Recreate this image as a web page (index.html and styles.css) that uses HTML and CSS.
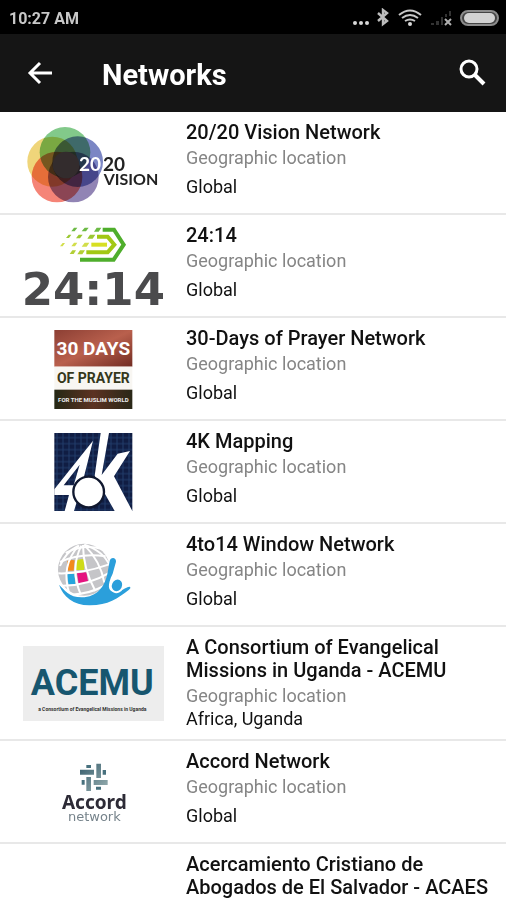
FILE: index.html
```html
<!DOCTYPE html>
<html lang="en">
<head>
    <meta charset="UTF-8">
    <meta name="viewport" content="width=device-width, initial-scale=1">
    <title>Networks</title>
    <link rel="stylesheet" href="styles.css">
</head>
<body>
    <div class="status-bar">
        <span class="time">10:27 AM</span>
        <svg class="status-icons" viewBox="0 0 147 20" aria-hidden="true">
            <!-- dots -->
            <g fill="#d8d8d8">
                <circle cx="3" cy="15" r="2"/>
                <circle cx="9" cy="15" r="2"/>
                <circle cx="15" cy="15" r="2"/>
            </g>
            <!-- bluetooth -->
            <path d="M26 5l9 8-4 3V2l4 3-9 8" fill="none" stroke="#bdbdbd" stroke-width="2.4"/>
            <!-- wifi -->
            <g fill="none" stroke="#c8c8c8" stroke-width="2">
                <path d="M47 7q11-9 22 0"/>
                <path d="M50 10q8-6 16 0"/>
                <path d="M53 13q5-3 10 0"/>
            </g>
            <circle cx="58" cy="16" r="2" fill="#d8d8d8"/>
            <!-- no signal -->
            <path d="M79 17v-2h3v2zM84 17v-4h3v4zM89 17V9h2v8zM93 9V6h2v3zM97 8V3h2v5z" fill="#333"/>
            <path d="M93 11l6 6M99 11l-6 6" stroke="#b0b0b0" stroke-width="2"/>
            <!-- battery -->
            <rect x="109" y="3" width="37" height="14" rx="7" fill="#444" stroke="#8c8c8c" stroke-width="2"/>
            <rect x="112" y="5" width="31" height="10" rx="5" fill="#d2d2d2"/>
        </svg>
    </div>

    <header class="toolbar">
        <button type="button" class="icon-btn" aria-label="Back">
            <svg viewBox="0 0 36 36"><path d="M30 18H9M18 8L8 18l10 10" fill="none" stroke="#fff" stroke-width="3"/></svg>
        </button>
        <h1>Networks</h1>
        <button type="button" class="icon-btn" aria-label="Search">
            <svg viewBox="0 0 36 36"><circle cx="15" cy="14" r="8" fill="none" stroke="#fff" stroke-width="3"/><path d="M21 20l9 9" stroke="#fff" stroke-width="4"/></svg>
        </button>
    </header>

    <ul class="networks">
        <li class="network">
            <svg class="logo" viewBox="69 31 423 240" aria-hidden="true">
                <g class="blend">
                    <circle cx="157" cy="147" r="75" fill="#efd57a"/>
                    <circle cx="195" cy="119" r="76" fill="#82c98a"/>
                    <circle cx="233" cy="147" r="76" fill="#7b86c4"/>
                    <circle cx="171" cy="193" r="76" fill="#f58477"/>
                    <circle cx="220" cy="193" r="76" fill="#9184b4"/>
                </g>
                <circle cx="198" cy="157" r="40" fill="#332c2d"/>
                <text x="237" y="176" class="lato" font-size="57" fill="#fff">20</text>
                <text x="309" y="176" class="lato" font-size="57" fill="#222">20</text>
                <text x="311" y="216" class="lato" font-size="48" fill="#222">VISION</text>
            </svg>
            <div class="info">
                <h2>20/20 Vision Network</h2>
                <p class="label">Geographic location</p>
                <p class="place">Global</p>
            </div>
        </li>
        <li class="network">
            <svg class="logo" viewBox="69 31 423 240" aria-hidden="true">
                <g fill="none" stroke-width="12">
                    <path d="M308 42h34l29 45-30 45H240" stroke="#4fae2c"/>
                    <path d="M291 63h32l20 24-20 23h-64" stroke="#a2c814"/>
                    <path d="M274 87h47" stroke="#d7df23"/>
                </g>
                <!-- slanted trail -->
                <path d="M222 36h10l-8 11h-10zM254 36h12l-8 11h-13zM290 36h14l-8 12h-14z" fill="#6cba45"/>
                <path d="M206 57h8l-7 10h-9zM236 57h12l-8 11h-12zM270 57h16l-8 12h-16z" fill="#9bc832"/>
                <path d="M188 82h7l-7 10h-8zM222 81h10l-7 11h-11zM254 81h14l-8 12h-15z" fill="#d2de4a"/>
                <path d="M217 104h11l-7 11h-12zM240 104h15l-8 12h-15z" fill="#b2cf35"/>
                <text x="280" y="269" class="dejavu" text-anchor="middle" font-size="135" fill="#4b4b4d">24:14</text>
            </svg>
            <div class="info">
                <h2>24:14</h2>
                <p class="label">Geographic location</p>
                <p class="place">Global</p>
            </div>
        </li>
        <li class="network">
            <svg class="logo" viewBox="69 25 423 240" aria-hidden="true">
                <defs>
                    <linearGradient id="sky" x1="0" y1="0" x2="1" y2="1">
                        <stop offset="0" stop-color="#8c3f34"/>
                        <stop offset=".5" stop-color="#b9604d"/>
                        <stop offset="1" stop-color="#722c22"/>
                    </linearGradient>
                    <linearGradient id="ground">
                        <stop offset="0" stop-color="#252815"/>
                        <stop offset=".5" stop-color="#5c3222"/>
                        <stop offset="1" stop-color="#292817"/>
                    </linearGradient>
                </defs>
                <rect x="163" y="28" width="234" height="110" fill="url(#sky)"/>
                <rect x="163" y="138" width="234" height="70" fill="#f8f6f2"/>
                <rect x="163" y="207" width="234" height="58" fill="url(#ground)"/>
                <text x="280" y="104" class="block" text-anchor="middle" font-size="57" fill="#fff">30 DAYS</text>
                <text x="280" y="188" class="block" text-anchor="middle" font-size="42" fill="#35381b">OF PRAYER</text>
                <text x="280" y="243" class="block" text-anchor="middle" font-size="18" fill="#eee">FOR THE MUSLIM WORLD</text>
            </svg>
            <div class="info">
                <h2>30-Days of Prayer Network</h2>
                <p class="label">Geographic location</p>
                <p class="place">Global</p>
            </div>
        </li>
        <li class="network">
            <svg class="logo" viewBox="69 28 423 240" aria-hidden="true">
                <defs>
                    <pattern id="grid" width="18" height="18" patternUnits="userSpaceOnUse">
                        <rect width="18" height="18" fill="#101d43"/>
                        <path d="M0 9h18M9 0v18" stroke="#213c6b" stroke-width="3"/>
                    </pattern>
                </defs>
                <rect x="163" y="31" width="234" height="234" fill="url(#grid)"/>
                <path d="M279 54l-32 128-25 83h-28l13-48h-44v-17zM239 126l-48 62h30z" fill="#fff" fill-rule="evenodd"/>
                <path d="M302 31h25l-22 126 48-64 37-8-48 76 55 104h-53l-60-106z" fill="#fff"/>
                <circle cx="266" cy="208" r="46" fill="#fff" stroke="#10182f" stroke-width="7"/>
            </svg>
            <div class="info">
                <h2>4K Mapping</h2>
                <p class="label">Geographic location</p>
                <p class="place">Global</p>
            </div>
        </li>
        <li class="network">
            <svg class="logo" viewBox="69 28 423 240" aria-hidden="true">
                <circle cx="252" cy="132" r="78" fill="#c5c5c8"/>
                <path d="M202 106q10-4 22-2l-3 31h-20z" fill="#f28a1c"/>
                <path d="M230 103q13-3 25-3l-3 33h-26z" fill="#cedb17"/>
                <path d="M200 146l23-2 3 31-20 2z" fill="#26a5dc"/>
                <path d="M231 143l28-3 6 31-29 4z" fill="#e5137f"/>
                <!-- globe lines -->
                <g fill="none" stroke="#fff" stroke-width="6">
                    <path d="M197 82q54-29 110-12M180 109q60-28 137-17M175 143q70 2 150-26M182 180q80 2 147-39M213 207q54-2 99-26"/>
                    <path d="M237 59q-56 60-29 145M244 60q-35 70-2 146M249 58q0 70 37 138M252 57q50 50 61 114M253 57q58 20 76 63M234 61q-38 19-54 60"/>
                </g>
                <path d="M177 177c16 15 30 38 68 38 47 0 70-32 78-75l6-34c2-12 20-12 19 2l-10 36c-18 36-14 56 8 54 18 0 30-14 43-15 4 2 2 6-3 10-32 25-64 47-119 46-46-1-78-26-90-62z" fill="#2b9fdb"/>
                <ellipse cx="351" cy="179" rx="18" ry="21" fill="#2b9fdb" stroke="#fff" stroke-width="6" transform="rotate(25 351 179)"/>
            </svg>
            <div class="info">
                <h2>4to14 Window Network</h2>
                <p class="label">Geographic location</p>
                <p class="place">Global</p>
            </div>
        </li>
        <li class="network">
            <svg class="logo" viewBox="69 56 423 225" aria-hidden="true">
                <rect x="69" y="56" width="423" height="225" fill="#ededed"/>
                <text x="277" y="204" class="block" text-anchor="middle" font-size="108" fill="#17566f">ACEMU</text>
                <text x="277" y="250" class="block" text-anchor="middle" font-size="15" fill="#333">a Consortium of Evangelical Missions in Uganda</text>
            </svg>
            <div class="info">
                <h2>A Consortium of Evangelical Missions in Uganda - ACEMU</h2>
                <p class="label">Geographic location</p>
                <p class="place">Africa, Uganda</p>
            </div>
        </li>
        <li class="network">
            <svg class="logo" viewBox="69 34 423 240" aria-hidden="true">
                <defs>
                    <linearGradient id="steel" x1="0" y1="0" x2="1" y2="1">
                        <stop offset="0" stop-color="#355c6b"/>
                        <stop offset="1" stop-color="#9bb1b3"/>
                    </linearGradient>
                </defs>
                <path d="M240 87h42v15h-42zM289 69h14v43h-14zM259 109h14v42h-14zM281 118h42v15h-42z" fill="url(#steel)"/>
                <path d="M259 73h14v9h-14zM308 88h10v14h-10zM245 118h9v14h-9zM288 138h15v9h-15z" fill="#48717e"/>
                <text x="283" y="204" class="noto" text-anchor="middle" font-size="57" fill="#2d2b36">Accord</text>
                <text x="283" y="240" class="thin" text-anchor="middle" font-size="39" fill="#76838b">network</text>
            </svg>
            <div class="info">
                <h2>Accord Network</h2>
                <p class="label">Geographic location</p>
                <p class="place">Global</p>
            </div>
        </li>
        <li class="network">
            <div class="logo"></div>
            <div class="info">
                <h2>Acercamiento Cristiano de Abogados de El Salvador - ACAES</h2>
            </div>
        </li>
    </ul>
</body>
</html>
```
FILE: styles.css
```css
* {
    box-sizing: border-box;
}
body {
    margin: 0;
    height: 100vh;
    display: flex;
    flex-direction: column;
    overflow: hidden;
    background-color: #fff;
    color: #111;
    font-family: Roboto, Arial, sans-serif;
}
h1, h2, p, ul {
    margin: 0;
    padding: 0;
}

/* top bars */
.status-bar {
    display: flex;
    flex: none;
    justify-content: space-between;
    align-items: center;
    height: 34px;
    padding: 2px 7px 0 9px;
    background-color: #000;
}
.time {
    color: #c8c8c8;
    font-size: 16px;
    font-weight: 700;
}
.status-icons {
    width: 147px;
    height: 20px;
}
.toolbar {
    display: flex;
    flex: none;
    align-items: center;
    height: 78px;
    padding: 0 16px 0 22px;
    background-color: #151515;
    color: #fff;
}
.toolbar h1 {
    flex: 1;
    margin-left: 44px;
    padding-top: 4px;
    font-size: 29px;
    font-weight: 700;
}
.icon-btn {
    width: 36px;
    height: 36px;
    padding: 0;
    border: 0;
    background: none;
    cursor: pointer;
}
.icon-btn svg {
    display: block;
    width: 100%;
    height: 100%;
}

/* list */
.networks {
    flex: 1;
    min-height: 0;
    overflow: hidden;
    list-style: none;
}
.network {
    display: flex;
    gap: 22px;
    min-height: 103px;
    padding: 0 16px 0 23px;
    border-bottom: 2px solid #e8e8e8;
}
.logo {
    flex: none;
    align-self: center;
    width: 141px;
    overflow: visible;
}
.info {
    display: flex;
    flex: 1;
    flex-direction: column;
    padding: 9px 0;
}
.info h2 {
    margin-bottom: 2px;
    font-size: 20px;
    font-weight: 500;
    line-height: 23px;
}
.label, .place {
    font-size: 18px;
    line-height: 23px;
}
.label {
    color: #858585;
}
.place {
    display: flex;
    flex: 1;
    align-items: center;
}

/* logo lettering */
.blend circle {
    mix-blend-mode: multiply;
}
.lato {
    font-family: Lato, sans-serif;
    font-weight: 700;
}
.dejavu {
    font-family: "DejaVu Sans", sans-serif;
    font-weight: 700;
}
.block {
    font-family: Roboto, sans-serif;
    font-weight: 700;
}
.noto {
    font-family: "Noto Sans", sans-serif;
    font-weight: 700;
}
.thin {
    font-family: "DejaVu Sans", sans-serif;
}
```
